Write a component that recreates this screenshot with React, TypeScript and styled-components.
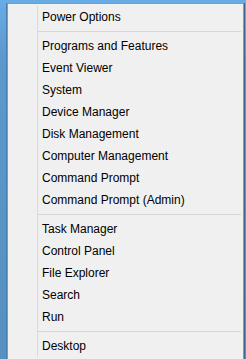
import { Fragment } from "react";
import styled, { createGlobalStyle } from "styled-components";

const GlobalStyle = createGlobalStyle`
  html, body {
    margin: 0;
    padding: 0;
    height: 100%;
    overflow: hidden;
  }
  body {
    background: linear-gradient(to bottom, #68ace6 0px, #5c98cc 60px, #5690c2 100%);
    font-family: "Liberation Sans", Arial, sans-serif;
  }
`;

const Screen = styled.div`
  display: flex;
  padding: 3px 2px 0 7px;
  height: 359px;
  box-sizing: border-box;
`;

const Menu = styled.div`
  width: 237px;
  box-sizing: border-box;
  background: #f0f0f0;
  border: 1px solid #979797;
  padding: 2px;
  align-self: flex-start;
  box-shadow: 1px 0 0 #3c6890, -1px 0 0 #4a80b0;
`;

const List = styled.ul`
  list-style: none;
  margin: 0;
  padding: 0;
  background: linear-gradient(
    to right,
    transparent 27px,
    #dadada 27px,
    #dadada 28px,
    transparent 28px
  );
`;

const Item = styled.li`
  height: 22px;
  line-height: 22px;
  padding-left: 32px;
  font-size: 12px;
  color: #000;
  white-space: nowrap;
`;

const Separator = styled.li`
  height: 1px;
  margin: 3px 0 3px 28px;
  background: #d7d7d7;
`;

const groups = [
  ["Power Options"],
  [
    "Programs and Features",
    "Event Viewer",
    "System",
    "Device Manager",
    "Disk Management",
    "Computer Management",
    "Command Prompt",
    "Command Prompt (Admin)",
  ],
  ["Task Manager", "Control Panel", "File Explorer", "Search", "Run"],
  ["Desktop"],
];

export default function App() {
  return (
    <>
      <GlobalStyle />
      <Screen>
        <Menu>
          <List>
            {groups.map((group, i) => (
              <Fragment key={group[0]}>
                {i > 0 && <Separator />}
                {group.map((label) => (
                  <Item key={label}>{label}</Item>
                ))}
              </Fragment>
            ))}
          </List>
        </Menu>
      </Screen>
    </>
  );
}
